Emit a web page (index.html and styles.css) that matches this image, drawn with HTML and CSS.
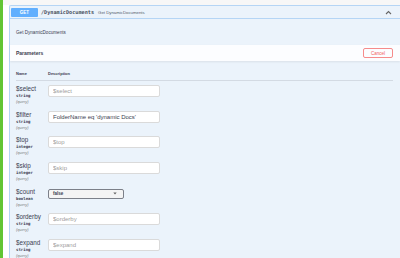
FILE: index.html
```html
<!DOCTYPE html>
<html lang="en">
<head>
  <meta charset="UTF-8" />
  <title>DynamicDocuments - Swagger</title>
  <link rel="stylesheet" href="styles.css">
</head>
<body>
  <div class="page">
    <div class="accent"></div>
    <div class="wrap">
      <div class="opblock">
        <div class="summary">
          <span class="method">GET</span>
          <span class="path">/DynamicDocuments</span>
          <span class="summary-text">Get DynamicDocuments</span>
          <svg class="chevron" width="7" height="5" viewBox="0 0 7 5">
            <path d="M1 4 L3.5 1.5 L6 4" fill="none" stroke="#666" stroke-width="1.1" />
          </svg>
        </div>

        <div class="desc">Get DynamicDocuments</div>

        <div class="section-header">
          <h4>Parameters</h4>
          <button class="cancel">Cancel</button>
        </div>

        <div class="params">
          <div class="params-head">
            <div class="col-name">Name</div>
            <div>Description</div>
          </div>

          <div class="row">
            <div class="col-name">
              <div class="pname">$select</div>
              <div class="ptype">string</div>
              <div class="pin">(query)</div>
            </div>
            <input type="text" placeholder="$select" />
          </div>

          <div class="row">
            <div class="col-name">
              <div class="pname">$filter</div>
              <div class="ptype">string</div>
              <div class="pin">(query)</div>
            </div>
            <input type="text" value="FolderName eq 'dynamic Docs'" />
          </div>

          <div class="row">
            <div class="col-name">
              <div class="pname">$top</div>
              <div class="ptype">integer</div>
              <div class="pin">(query)</div>
            </div>
            <input type="text" placeholder="$top" />
          </div>

          <div class="row">
            <div class="col-name">
              <div class="pname">$skip</div>
              <div class="ptype">integer</div>
              <div class="pin">(query)</div>
            </div>
            <input type="text" placeholder="$skip" />
          </div>

          <div class="row">
            <div class="col-name">
              <div class="pname">$count</div>
              <div class="ptype">boolean</div>
              <div class="pin">(query)</div>
            </div>
            <div class="select">
              <span>false</span>
              <svg width="4" height="3" viewBox="0 0 4 3">
                <path d="M0.3 0.5 L2 2.5 L3.7 0.5 Z" fill="#666" />
              </svg>
            </div>
          </div>

          <div class="row">
            <div class="col-name">
              <div class="pname">$orderby</div>
              <div class="ptype">string</div>
              <div class="pin">(query)</div>
            </div>
            <input type="text" placeholder="$orderby" />
          </div>

          <div class="row">
            <div class="col-name">
              <div class="pname">$expand</div>
              <div class="ptype">string</div>
              <div class="pin">(query)</div>
            </div>
            <input type="text" placeholder="$expand" />
          </div>
        </div>
      </div>
    </div>
  </div>
</body>
</html>
```

FILE: styles.css
```css
body {
  margin: 0;
  background: #fff;
  font-family: "Liberation Sans", Arial, sans-serif;
  color: #3b4151;
  overflow: hidden;
}

.page {
  display: flex;
  min-height: 100vh;
}

.accent {
  width: 3px;
  background: #62c534;
}

.wrap {
  flex: 1;
  padding: 5px 0 0 6px;
  background: linear-gradient(to bottom, #f7f7f7 0, #f7f7f7 5px, #fff 5px);
}

.opblock {
  background: #ebf3fb;
  border: 1px solid #b5d5f5;
  border-right: none;
  border-bottom: none;
  border-radius: 2px 0 0 0;
  min-height: 260px;
}

.summary {
  display: flex;
  align-items: center;
  height: 12px;
  padding: 0 8px 0 1px;
  border-bottom: 1px solid #b5d5f5;
}

.method {
  width: 27px;
  height: 9px;
  line-height: 9px;
  text-align: center;
  background: #61affe;
  color: #fff;
  border-radius: 1px;
  font-weight: bold;
  font-size: 4.5px;
}

.path {
  margin-left: 3px;
  font-family: "DejaVu Sans Mono", monospace;
  font-weight: bold;
  font-size: 5.2px;
  color: #4a5060;
}

.summary-text {
  margin-left: 4px;
  font-size: 4.3px;
  color: #555b6a;
}

.chevron {
  margin-left: auto;
}

.desc {
  height: 26px;
  display: flex;
  align-items: center;
  padding-left: 6px;
  font-size: 4.6px;
}

.section-header {
  display: flex;
  justify-content: space-between;
  align-items: center;
  height: 16px;
  padding: 0 7px 0 6px;
  background: #fcfdff;
  box-shadow: 0 1px 2px rgba(0, 0, 0, 0.08);
}

.section-header h4 {
  margin: 0;
  font-size: 5px;
  font-weight: bold;
}

.cancel {
  width: 30px;
  height: 10px;
  padding: 0;
  background: transparent;
  border: 1px solid #f68b8b;
  border-radius: 2px;
  color: #f25c5c;
  font-family: inherit;
  font-size: 4.5px;
}

.params {
  padding: 0 7px 0 6px;
}

.params-head {
  display: flex;
  padding: 10px 0 3px;
  line-height: 6px;
  font-size: 4px;
  font-weight: bold;
  border-bottom: 1px solid #d3dae3;
  margin-bottom: 4px;
}

.col-name {
  width: 32px;
  flex-shrink: 0;
}

.row {
  display: flex;
  align-items: flex-start;
  height: 25.7px;
}

.pname {
  font-size: 6.3px;
  line-height: 7px;
}

.ptype {
  font-family: "DejaVu Sans Mono", monospace;
  font-weight: bold;
  font-size: 4px;
  line-height: 7px;
}

.pin {
  font-style: italic;
  font-size: 4px;
  line-height: 6px;
  color: #808080;
}

input {
  width: 112px;
  height: 12px;
  box-sizing: border-box;
  padding: 0 4px;
  border: 1px solid #dadada;
  border-radius: 2px;
  background: #fff;
  font-family: inherit;
  font-size: 6px;
  color: #3b4151;
}

input::placeholder {
  color: #a0a0a0;
}

.select {
  display: flex;
  justify-content: space-between;
  align-items: center;
  width: 76px;
  height: 10px;
  margin-top: 1px;
  box-sizing: border-box;
  padding: 0 6px 0 4px;
  border: 1px solid #7c8089;
  border-radius: 2px;
  background: #f4f4f4;
  font-size: 4.5px;
  font-weight: bold;
}
```
